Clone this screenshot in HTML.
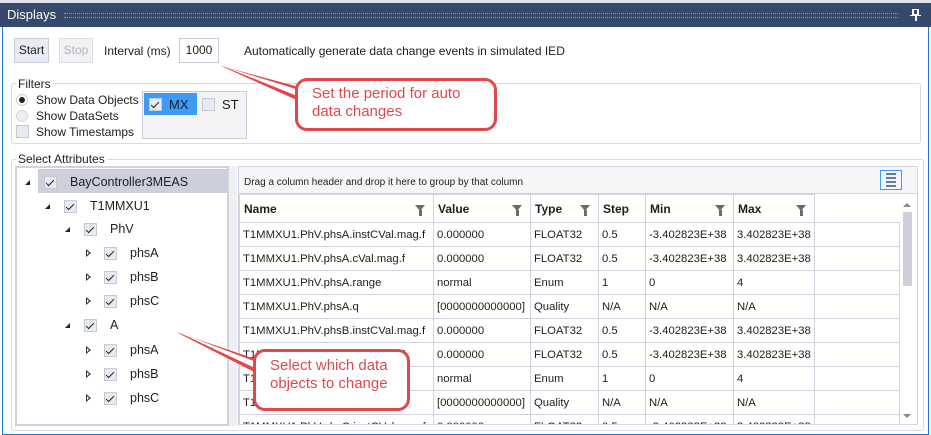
<!DOCTYPE html>
<html><head><style>
*{box-sizing:border-box;margin:0;padding:0}
html,body{width:931px;height:435px;overflow:hidden}
body{background:#fff;font-family:"Liberation Sans",sans-serif;font-size:12px;color:#1e1e1e;position:relative}
.a{position:absolute}
.title{left:0;top:0;width:931px;height:27px;background:#34496b;border-top:3px solid #dfe3ee}
.title span{position:absolute;left:7px;top:4px;color:#fff;font-size:13px}
.dots{position:absolute;left:64px;right:33px;top:10px;height:5px;border-top:1px dotted #8a9cc0;border-bottom:1px dotted #8a9cc0}
.frame{left:2px;top:27px;width:927px;height:408px;border:1px solid #1c7ad6;border-top:none}
.btn{height:25px;border:1px solid #c8cbd8;background:#e9ebf3;text-align:center;line-height:23px}
.grp{border:1px solid #d8dbe2;border-radius:3px}
.cb{width:13px;height:13px;border:1px solid #c5c9d6;background:#e8eaf2}
.ck::after{content:"";position:absolute;left:3px;top:1px;width:3px;height:7px;border:solid #222;border-width:0 1.5px 1.5px 0;transform:rotate(45deg)}
table{border-collapse:collapse;table-layout:fixed;width:660px}
td{border:1px solid #d2d2e0;height:24px;padding:0 0 0 3px;white-space:nowrap;overflow:hidden;font-size:11.3px}
th{border:1px solid #d2d2e0;height:28px;text-align:left;padding-left:4px;font-weight:bold;position:relative}
.f{position:absolute;right:8px;top:10px;width:0;height:0;border-left:5px solid transparent;border-right:5px solid transparent;border-top:6px solid #6b6b6b}
.f::after{content:"";position:absolute;left:-1.5px;top:-1px;width:3px;height:6px;background:#6b6b6b}
.bubble{border:3px solid #e0484a;border-radius:12px;background:#fff;color:#e0484a;font-size:15px;line-height:18px;padding:4px 14px}
</style></head><body>
<div class="a title"><span>Displays</span><div class="dots"></div>
<div class="a" style="right:12px;top:6px;width:7px;height:7px;border:2px solid #fff;border-top-width:1px"></div><div class="a" style="right:14px;top:13px;width:2px;height:5px;background:#fff"></div><div class="a" style="right:10px;top:12px;width:11px;height:1px;background:#fff"></div></div>
<div class="a frame"></div>
<div class="a btn" style="left:14px;top:38px;width:35px">Start</div>
<div class="a btn" style="left:59px;top:38px;width:34px;color:#b5b5b5;background:#f2f2f4;border-color:#dcdde3">Stop</div>
<div class="a" style="left:104px;top:44px">Interval (ms)</div>
<div class="a" style="left:179px;top:38px;width:40px;height:25px;border:1px solid #c8cbd8;text-align:center;line-height:23px">1000</div>
<div class="a" style="left:244px;top:44px">Automatically generate data change events in simulated IED</div>

<div class="a grp" style="left:11px;top:83px;width:910px;height:61px"></div>
<div class="a" style="left:16px;top:77px;background:#fff;padding:0 2px">Filters</div>
<div class="a" style="left:16px;top:94px;width:12px;height:12px;border-radius:50%;border:1px solid #ccc;background:#fff"><div class="a" style="left:2px;top:2px;width:6px;height:6px;border-radius:50%;background:#222"></div></div>
<div class="a" style="left:36px;top:93px">Show Data Objects</div>
<div class="a" style="left:16px;top:110px;width:12px;height:12px;border-radius:50%;border:1px solid #d6d9e2;background:#eceef4"></div>
<div class="a" style="left:36px;top:109px">Show DataSets</div>
<div class="a cb" style="left:16px;top:125px"></div>
<div class="a" style="left:36px;top:125px">Show Timestamps</div>
<div class="a" style="left:142px;top:91px;width:105px;height:48px;border:1px solid #c8cbd8;background:#f3f3f6"></div>
<div class="a" style="left:144px;top:93px;width:53px;height:22px;background:#3d9af5"></div>
<div class="a cb ck" style="left:149px;top:98px"></div>
<div class="a" style="left:169px;top:97px;font-size:13px">MX</div>
<div class="a cb" style="left:202px;top:98px"></div>
<div class="a" style="left:222px;top:97px;font-size:13px">ST</div>

<div class="a grp" style="left:11px;top:159px;width:913px;height:272px"></div>
<div class="a" style="left:16px;top:152px;background:#fff;padding:0 2px">Select Attributes</div>
<div class="a" style="left:15px;top:166px;width:214px;height:260px;border:2px solid #d0d3dc"></div>
<div class="a" style="left:38px;top:169px;width:189px;height:24px;background:#cdd0dc"></div>
<div class="a" style="left:229px;top:166px;width:8px;height:260px;background:#eef0f4"></div>
<div id="tree"></div>

<div class="a" style="left:238px;top:166px;width:680px;height:259px;border:1px solid #d2d2e0"></div>
<div class="a" style="left:239px;top:167px;width:678px;height:27px;background:#f6f6f8;border-bottom:1px solid #d2d2e0"></div>
<div class="a" style="left:244px;top:177px;font-size:10px">Drag a column header and drop it here to group by that column</div>
<div class="a" style="left:880px;top:170px;width:22px;height:20px;border:1px solid #3d9af5;background:#f0f4fb"></div>
<div class="a" style="left:886px;top:173px;width:10px;height:14px;background:repeating-linear-gradient(#6d7a95 0 2px,transparent 2px 4px)"></div>
<div class="a" style="left:239px;top:194px;width:661px;height:230px;overflow:hidden">
<table>
<colgroup><col style="width:194px"><col style="width:97px"><col style="width:68px"><col style="width:47px"><col style="width:88px"><col style="width:81px"><col style="width:85px"></colgroup>
<tr><th>Name<i class="f"></i></th><th>Value<i class="f"></i></th><th>Type<i class="f"></i></th><th>Step</th><th>Min<i class="f"></i></th><th>Max<i class="f"></i></th><th style="border:none;border-bottom:1px solid #d2d2e0"></th></tr>
<tr><td>T1MMXU1.PhV.phsA.instCVal.mag.f</td><td>0.000000</td><td>FLOAT32</td><td>0.5</td><td>-3.402823E+38</td><td>3.402823E+38</td><td></td></tr>
<tr><td>T1MMXU1.PhV.phsA.cVal.mag.f</td><td>0.000000</td><td>FLOAT32</td><td>0.5</td><td>-3.402823E+38</td><td>3.402823E+38</td><td></td></tr>
<tr><td>T1MMXU1.PhV.phsA.range</td><td>normal</td><td>Enum</td><td>1</td><td>0</td><td>4</td><td></td></tr>
<tr><td>T1MMXU1.PhV.phsA.q</td><td>[0000000000000]</td><td>Quality</td><td>N/A</td><td>N/A</td><td>N/A</td><td></td></tr>
<tr><td>T1MMXU1.PhV.phsB.instCVal.mag.f</td><td>0.000000</td><td>FLOAT32</td><td>0.5</td><td>-3.402823E+38</td><td>3.402823E+38</td><td></td></tr>
<tr><td>T1MMXU1.PhV.phsB.cVal.mag.f</td><td>0.000000</td><td>FLOAT32</td><td>0.5</td><td>-3.402823E+38</td><td>3.402823E+38</td><td></td></tr>
<tr><td>T1MMXU1.PhV.phsB.range</td><td>normal</td><td>Enum</td><td>1</td><td>0</td><td>4</td><td></td></tr>
<tr><td>T1MMXU1.PhV.phsB.q</td><td>[0000000000000]</td><td>Quality</td><td>N/A</td><td>N/A</td><td>N/A</td><td></td></tr>
<tr><td>T1MMXU1.PhV.phsC.instCVal.mag.f</td><td>0.000000</td><td>FLOAT32</td><td>0.5</td><td>-3.402823E+38</td><td>3.402823E+38</td><td></td></tr>
</table></div>
<div class="a" style="left:900px;top:195px;width:17px;height:229px;background:#fff"></div>
<div class="a" style="left:903px;top:212px;width:9px;height:74px;background:#cdd0dc"></div>
<div class="a" style="left:903px;top:203px;border-left:4px solid transparent;border-right:4px solid transparent;border-bottom:4px solid #888"></div>
<div class="a" style="left:903px;top:414px;border-left:4px solid transparent;border-right:4px solid transparent;border-top:4px solid #888"></div>

<svg class="a" style="left:0;top:0" width="931" height="435">
<polygon points="221,66 310,90 310,106" fill="#e0484a"/>
<polygon points="225,67 312,94 312,102" fill="#fff"/>
<polygon points="176,332 270,364 270,380" fill="#e0484a"/>
<polygon points="180,333 272,368 272,376" fill="#fff"/>
</svg>
<div class="a bubble" style="left:295px;top:78px;width:202px;height:53px;padding-top:4px">Set the period for auto<br>data changes</div>
<div class="a bubble" style="left:253px;top:349px;width:157px;height:62px;padding-top:5px">Select which data<br>objects to change</div>
<script>
var t=[[0,'BayController3MEAS',182,1],[1,'T1MMXU1',206,1],[2,'PhV',229,1],[3,'phsA',253,0],[3,'phsB',277,0],[3,'phsC',301,0],[2,'A',325,1],[3,'phsA',350,0],[3,'phsB',374,0],[3,'phsC',398,0]];
var h='';t.forEach(function(r){var x=25+r[0]*20;
h+=r[3]?'<div class="a" style="left:'+x+'px;top:'+(r[2]-2)+'px;border-left:5px solid transparent;border-bottom:5px solid #222"></div>':'<div class="a" style="left:'+(x+1)+'px;top:'+(r[2]-4)+'px;border-top:4px solid transparent;border-bottom:4px solid transparent;border-left:5px solid #333"></div><div class="a" style="left:'+(x+2)+'px;top:'+(r[2]-2)+'px;border-top:2px solid transparent;border-bottom:2px solid transparent;border-left:2px solid #fff"></div>';
h+='<div class="a cb ck" style="left:'+(x+19)+'px;top:'+(r[2]-6)+'px"></div><div class="a" style="left:'+(x+45)+'px;top:'+(r[2]-7)+'px;font-size:12.5px">'+r[1]+'</div>';});
document.getElementById('tree').innerHTML=h;
</script>
</body></html>
